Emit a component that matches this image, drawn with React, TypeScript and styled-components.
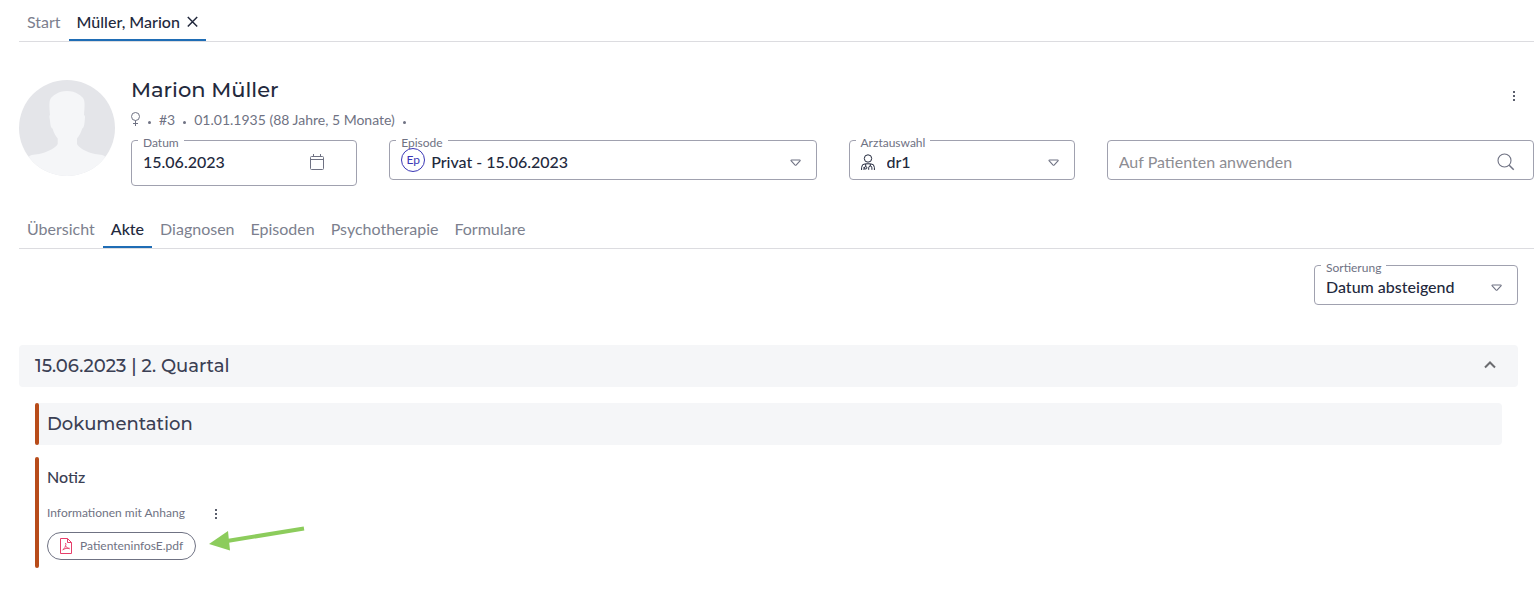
import React from "react";
import styled, { createGlobalStyle, css } from "styled-components";

const ink = "#23293d";
const slate = "#3b4054";
const muted = "#7c7f8e";
const outline = "#a0a1af";
const blue = "#1f6db5";
const rust = "#b84c1a";
const panel = "#f5f6f8";

const GlobalStyle = createGlobalStyle`
  *, *::before, *::after { box-sizing: border-box; }
  body {
    margin: 0;
    background: #fff;
    color: ${ink};
    font-family: Lato, "Liberation Sans", sans-serif;
    font-size: 16px;
    line-height: 20px;
  }
  button, input, select { font: inherit; color: inherit; }
  h1, h2, h3, p { margin: 0; }
`;

const Page = styled.div`
  padding: 0 6px 40px 19px;
`;

const TabBar = styled.nav`
  display: flex;
  height: 42px;
  border-bottom: 1px solid #dcdce0;
`;

const Tab = styled.div<{ $active?: boolean }>`
  display: flex;
  align-items: center;
  gap: 7px;
  padding: 4px 8px 0;
  border-bottom: 2px solid ${(p) => (p.$active ? blue : "transparent")};
`;

const TabLink = styled.a<{ $active?: boolean }>`
  color: ${(p) => (p.$active ? ink : muted)};
  font-weight: ${(p) => (p.$active ? 500 : 400)};
  text-decoration: none;
`;

const IconButton = styled.button`
  display: inline-flex;
  flex: none;
  align-items: center;
  justify-content: center;
  padding: 0;
  border: 0;
  background: none;
  color: ${ink};
  cursor: pointer;
`;

const headingFont = css`
  font-family: Montserrat, Inter, sans-serif;
  font-weight: 500;
`;

const PatientHeader = styled.header`
  display: flex;
  gap: 16px;
  padding: 38px 0 21px;
`;

const Avatar = styled.svg`
  flex: none;
  width: 96px;
  height: 96px;
`;

const PatientInfo = styled.div`
  flex: 1;
  min-width: 0;
`;

const TitleRow = styled.div`
  display: flex;
  justify-content: space-between;
  height: 30px;
  padding: 0 14px 0 0;
`;

const PatientName = styled.h1`
  ${headingFont}
  font-size: 21px;
  line-height: 20px;
`;

const MetaRow = styled.div`
  display: flex;
  align-items: center;
  gap: 8px;
  height: 20px;
  color: #6f7283;
  font-size: 14px;
`;

const Dot = styled.i`
  width: 3px;
  height: 3px;
  margin-top: 4px;
  border-radius: 50%;
  background: currentColor;
`;

const FieldGrid = styled.div`
  display: grid;
  grid-template-columns: minmax(0, 9fr) minmax(0, 17fr) minmax(0, 9fr) minmax(0, 17fr);
  align-items: start;
  gap: 32px;
  margin-top: 10px;
`;

const Field = styled.div<{ $tall?: boolean; $gap?: number }>`
  position: relative;
  display: flex;
  align-items: center;
  gap: ${(p) => p.$gap ?? 6}px;
  height: ${(p) => (p.$tall ? 46 : 40)}px;
  padding: ${(p) => (p.$tall ? "0 32px 2px 11px" : "4px 14px 0 11px")};
  border: 1px solid ${outline};
  border-radius: 4px;
`;

const FieldLabel = styled.label`
  position: absolute;
  top: -8px;
  left: 6px;
  padding: 0 5px;
  background: #fff;
  color: #6f7283;
  font-size: 12px;
  line-height: 20px;
  height: 18px;
`;

const control = css`
  flex: 1;
  min-width: 0;
  height: 24px;
  border: 0;
  outline: 0;
  background: none;
  font-weight: 500;
`;

const TextInput = styled.input`
  ${control}
  padding: 0 0 2px;
  &::placeholder { color: #8d8d93; font-weight: 400; opacity: 1; }
`;

const Select = styled.select`
  ${control}
  padding: 0;
  appearance: none;
`;

const EpisodeBadge = styled.span`
  position: relative;
  display: flex;
  flex: none;
  align-items: center;
  justify-content: center;
  width: 24px;
  height: 24px;
  margin-bottom: 4px;
  border: 1px solid #3a36b5;
  border-radius: 50%;
  color: #3a36b5;
  font-size: 12px;
`;

const SortRow = styled.div`
  display: flex;
  justify-content: flex-end;
  padding: 16px 0 40px;
`;

const SortField = styled(Field)`
  width: 204px;
`;

const Record = styled.main`
  padding-right: 16px;
`;

const QuarterHeader = styled.div`
  display: flex;
  align-items: center;
  justify-content: space-between;
  height: 42px;
  padding: 0 20px 0 16px;
  border-radius: 4px;
  background: ${panel};
`;

const SectionTitle = styled.h2`
  ${headingFont}
  color: ${slate};
  font-size: 18px;
  line-height: 24px;
`;

const Entries = styled.div`
  display: flex;
  flex-direction: column;
  gap: 12px;
  padding: 16px 16px 0;
`;

const Entry = styled.section<{ $filled?: boolean }>`
  display: flex;
  border-radius: 4px;
  background: ${(p) => (p.$filled ? panel : "none")};
  &::before {
    content: "";
    flex: none;
    width: 4px;
    border-radius: 2px;
    background: ${rust};
  }
`;

const EntryBody = styled.div<{ $note?: boolean }>`
  padding: ${(p) => (p.$note ? "10px 8px 8px" : "9px 8px")};
`;

const NoteTitle = styled.h3`
  color: ${slate};
  font-size: 16px;
  font-weight: 500;
`;

const NoteRow = styled.div`
  display: flex;
  align-items: center;
  gap: 25px;
  margin: 16px 0 9px;
  color: #6f7283;
  font-size: 12px;
`;

const Attachment = styled.div`
  position: relative;
  width: fit-content;
`;

const FileChip = styled.button`
  display: flex;
  align-items: center;
  gap: 8px;
  height: 28px;
  padding: 0 12px;
  border: 1px solid #6f7283;
  border-radius: 14px;
  background: #fff;
  color: #6f7283;
  font-size: 12px;
  cursor: pointer;
`;

const Pointer = styled.svg`
  position: absolute;
  top: -7px;
  left: calc(100% + 13px);
`;

const Caret = () => (
  <svg width="13" height="10" viewBox="0 0 13 10" fill="none" stroke="#6f7283" strokeWidth="1.1" strokeLinejoin="round" aria-hidden="true">
    <path d="M2.600 3h8q1 0 .4.800L7.300 7.900q-.700.700-1.400 0L2.200 3.800Q1.600 3 2.600 3z" />
  </svg>
);

const Kebab = ({ label }: { label: string }) => (
  <IconButton aria-label={label}>
    <svg width="12" height="14" viewBox="0 0 12 14" fill="currentColor">
      <circle cx="6" cy="4" r="1" />
      <circle cx="6" cy="8" r="1" />
      <circle cx="6" cy="12" r="1" />
    </svg>
  </IconButton>
);

const sections = ["Übersicht", "Akte", "Diagnosen", "Episoden", "Psychotherapie", "Formulare"];

export default function App() {
  return (
    <>
      <GlobalStyle />
      <Page>
        <TabBar aria-label="Patienten">
          <Tab><TabLink href="#start">Start</TabLink></Tab>
          <Tab $active>
            <TabLink $active href="#patient">Müller, Marion</TabLink>
            <IconButton aria-label="Schließen">
              <svg width="11" height="12" viewBox="0 0 11 12" fill="none" stroke="currentColor" strokeWidth="1.5">
                <path d="M.8 1l9.400 9.600M10.200 1L.8 10.600" />
              </svg>
            </IconButton>
          </Tab>
        </TabBar>

        <PatientHeader>
          <Avatar viewBox="0 0 96 96" aria-hidden="true">
            <defs><clipPath id="avatar"><circle cx="48" cy="48" r="48" /></clipPath></defs>
            <circle cx="48" cy="48" r="48" fill="#e4e5e9" />
            <path
              clipPath="url(#avatar)"
              fill={panel}
              d="M31 35C30.500 29 30 23 31 20c1-3 3-4 6-6 5-4 17-4 22 0 3 2 5 3 6 6 1 3 .5 9 0 15 1.500.500 1 3 .7 6-.3 3-.700 7-2.500 7.500C62 53 60 56 58 58.500V64c2 4 8 7 14 9 5 1.500 11 1.500 13.500 3L96 96H0l10.500-20c2.500-1.500 8.500-1.500 13.500-3 6-2 12.700-5 14.700-9v-5.500c-2-2.500-4-5.500-5.200-10-1.800-.5-2.200-4.500-2.500-7.500-.3-3-1.200-5.500 0-6z"
            />
          </Avatar>
          <PatientInfo>
            <TitleRow>
              <PatientName>Marion Müller</PatientName>
              <Kebab label="Weitere Aktionen" />
            </TitleRow>
            <MetaRow>
              <svg width="9" height="16" viewBox="0 0 9 16" fill="none" stroke="currentColor" role="img" aria-label="weiblich">
                <circle cx="4.500" cy="4.500" r="4" />
                <path d="M4.500 8.500V14M2 11.500h5" />
              </svg>
              <Dot /><span>#3</span><Dot />
              <span>01.01.1935 (88 Jahre, 5 Monate)</span><Dot />
            </MetaRow>
            <FieldGrid>
              <Field $tall>
                <FieldLabel htmlFor="datum">Datum</FieldLabel>
                <TextInput id="datum" defaultValue="15.06.2023" />
                <IconButton aria-label="Kalender öffnen">
                  <svg width="14" height="16" viewBox="0 0 14 16" fill="none" stroke="#6f7283">
                    <rect x=".5" y="2.500" width="13" height="13" rx="1" />
                    <path d="M.5 5.500h13M3.500 0v3M10.500 0v3" />
                  </svg>
                </IconButton>
              </Field>
              <Field>
                <FieldLabel htmlFor="episode">Episode</FieldLabel>
                <EpisodeBadge>Ep</EpisodeBadge>
                <Select id="episode"><option>Privat - 15.06.2023</option></Select>
                <Caret />
              </Field>
              <Field $gap={12}>
                <FieldLabel htmlFor="arzt">Arztauswahl</FieldLabel>
                <svg width="14" height="17" viewBox="0 0 14 17" fill="none" stroke={ink} aria-hidden="true">
                  <circle cx="7" cy="4.500" r="3.700" />
                  <path d="M.6 16v-2.500Q.6 9.800 4.500 9.800h5q3.900 0 3.900 3.700V16M3 16v-3M4.700 10v2.500M9.300 10v2" />
                  <circle cx="4.700" cy="13.800" r="1.200" />
                  <path d="M7.700 15.800v-2q0-1.700 1.600-1.700t1.600 1.700v2" />
                </svg>
                <Select id="arzt"><option>dr1</option></Select>
                <Caret />
              </Field>
              <Field>
                <TextInput aria-label="Auf Patienten anwenden" placeholder="Auf Patienten anwenden" />
                <IconButton aria-label="Suchen">
                  <svg width="24" height="18" viewBox="0 0 24 18" fill="none" stroke="#6f7283" strokeWidth="1.100">
                    <circle cx="9.500" cy="7.500" r="6.500" />
                    <path d="M14.200 12.200l4.500 4.500" strokeWidth="1.500" />
                  </svg>
                </IconButton>
              </Field>
            </FieldGrid>
          </PatientInfo>
        </PatientHeader>

        <TabBar aria-label="Bereiche">
          {sections.map((s) => (
            <Tab key={s} $active={s === "Akte"}>
              <TabLink $active={s === "Akte"} href={`#${s}`}>{s}</TabLink>
            </Tab>
          ))}
        </TabBar>

        <Record>
          <SortRow>
            <SortField>
              <FieldLabel htmlFor="sortierung">Sortierung</FieldLabel>
              <Select id="sortierung"><option>Datum absteigend</option></Select>
              <Caret />
            </SortField>
          </SortRow>

          <QuarterHeader>
            <SectionTitle>15.06.2023 | 2. Quartal</SectionTitle>
            <IconButton aria-label="Einklappen">
              <svg width="16" height="12" viewBox="0 0 16 12" fill="none" stroke="#6b6c70" strokeWidth="2">
                <path d="M3 7.500l5-5 5 5" />
              </svg>
            </IconButton>
          </QuarterHeader>

          <Entries>
            <Entry $filled>
              <EntryBody><SectionTitle>Dokumentation</SectionTitle></EntryBody>
            </Entry>
            <Entry>
              <EntryBody $note>
                <NoteTitle>Notiz</NoteTitle>
                <NoteRow>
                  <p>Informationen mit Anhang</p>
                  <Kebab label="Notizaktionen" />
                </NoteRow>
                <Attachment>
                  <FileChip>
                    <svg width="12" height="16" viewBox="0 0 12 16" fill="none" stroke="#e63e6a" aria-hidden="true">
                      <path d="M.5.5h7l4 4v11H.5zM7.500.5v4h4" />
                      <path d="M5 5.500q1.200-.6.900 1.300-.5 3-3.400 5.500M5.700 8q.8 2.200 4 2.900M3 11.500q2.800-1.500 6.500-1.300" strokeWidth=".9" />
                    </svg>
                    PatienteninfosE.pdf
                  </FileChip>
                  <Pointer width="96" height="28" viewBox="0 0 96 28" aria-hidden="true">
                    <path d="M95 3.500L18 16" stroke="#8ccc5c" strokeWidth="4" />
                    <path d="M0 19L19 6l2 19.500z" fill="#8ccc5c" />
                  </Pointer>
                </Attachment>
              </EntryBody>
            </Entry>
          </Entries>
        </Record>
      </Page>
    </>
  );
}
